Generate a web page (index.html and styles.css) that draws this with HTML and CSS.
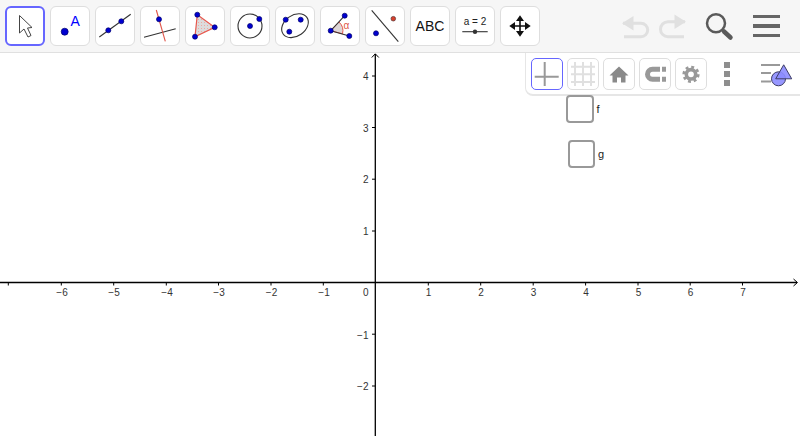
FILE: index.html
```html
<!DOCTYPE html>
<html lang="en">
<head>
    <meta charset="UTF-8">
    <meta name="viewport" content="width=device-width, initial-scale=1.0">
    <title>GeoGebra Classic</title>
    <link rel="stylesheet" href="styles.css">
</head>
<body>
    <div class="app">
        <div class="toolbar">
            <div class="tools">
                <button class="tool active">
                    <svg viewBox="0 0 40 40"><path class="cursor" d="M14.5 9.5V27L19 23l4 8 3-1.5L22.500 22l4.500-.5Z"/></svg>
                </button>
                <button class="tool">
                    <svg viewBox="0 0 40 40"><circle class="pt big" cx="14.700" cy="25.700" r="3.500"/><text class="pt-name" x="20.500" y="19.500">A</text></svg>
                </button>
                <button class="tool">
                    <svg viewBox="0 0 40 40"><path class="ln" d="M4.300 31 35.700 8.300"/><circle class="pt" cx="13.300" cy="24.300" r="2.500"/><circle class="pt" cx="26.300" cy="15.300" r="2.500"/></svg>
                </button>
                <button class="tool">
                    <svg viewBox="0 0 40 40"><path class="ln" d="M4 31.300 35.700 22.700"/><path class="ln-red" d="M16.300 4 25.300 35.300"/><circle class="pt" cx="19" cy="13.300" r="2.500"/></svg>
                </button>
                <button class="tool">
                    <svg viewBox="0 0 40 40">
                        <defs>
                            <pattern id="stipple" width="3" height="3" patternUnits="userSpaceOnUse"><rect class="stipple-bg" width="3" height="3"/><rect class="stipple-dot" x="1" y="1" width="1" height="1"/></pattern>
                        </defs>
                        <path class="poly" fill="url(#stipple)" d="M12.300 8.700 29.700 21.300 10 30.700Z"/><circle class="pt" cx="12.300" cy="8.700" r="2.500"/><circle class="pt" cx="29.700" cy="21.300" r="2.500"/><circle class="pt" cx="10" cy="30.700" r="2.500"/>
                    </svg>
                </button>
                <button class="tool">
                    <svg viewBox="0 0 40 40"><circle class="ln" cx="20" cy="20" r="12"/><circle class="pt" cx="20" cy="20" r="2.500"/><circle class="pt" cx="29.300" cy="13" r="2.500"/></svg>
                </button>
                <button class="tool">
                    <svg viewBox="0 0 40 40"><ellipse class="ln" cx="20" cy="19.700" rx="14.500" ry="10.500" transform="rotate(-35 20 19.700)"/><circle class="pt" cx="10.700" cy="13.700" r="2.500"/><circle class="pt" cx="25.700" cy="13.700" r="2.500"/><circle class="pt" cx="14.300" cy="25.700" r="2.500"/></svg>
                </button>
                <button class="tool">
                    <svg viewBox="0 0 40 40"><path class="wedge" d="M10.700 24.700 19 16A12 12 0 0 1 22.500 27.800Z"/><path class="ln" d="M24.700 9.700 10.700 24.700 29.300 30"/><text class="alpha" x="23.500" y="23">α</text><circle class="pt" cx="10.700" cy="24.700" r="2.500"/><circle class="pt" cx="24.700" cy="9.700" r="2.500"/><circle class="pt" cx="29.300" cy="30" r="2.500"/></svg>
                </button>
                <button class="tool">
                    <svg viewBox="0 0 40 40"><path class="ln" d="M6.700 4.300 33.300 35.700"/><circle class="pt" cx="11" cy="27.300" r="2.500"/><circle class="pt red" cx="28.300" cy="12.700" r="2.300"/></svg>
                </button>
                <button class="tool abc">ABC</button>
                <button class="tool">
                    <svg viewBox="0 0 40 40"><text class="slider-text" x="20" y="19">a = 2</text><path class="ln" d="M7.300 25.700H32.700"/><circle class="knob" cx="20" cy="25.700" r="2.200"/></svg>
                </button>
                <button class="tool">
                    <svg viewBox="0 0 40 40"><path class="move-line" d="M20 12V28M12 20H28"/><path class="move-head" d="M20 9.300 24 15H16ZM20 30.700 16 25H24ZM9.300 20 15 16V24ZM30.700 20 25 24V16Z"/></svg>
                </button>
            </div>
            <div class="actions">
                <svg class="undo" viewBox="0 0 30 26" width="30" height="26"><path d="M2 10.300H20a6.700 6.700 0 0 1 0 13.400H3"/><path class="head" d="M1 10.300 12.500 3V17.600Z"/></svg>
                <svg class="undo" viewBox="0 0 30 26" width="30" height="26"><path d="M28 8.700H11a7.500 7.500 0 0 0 0 15H27"/><path class="head" d="M29 8.700 17.500 1.400V16Z"/></svg>
                <svg class="search" viewBox="0 0 32 32" width="32" height="32"><circle cx="13" cy="13.300" r="9"/><path class="grip" d="M21 21.500 27.500 27.500"/></svg>
                <div class="menu"><span></span><span></span><span></span></div>
            </div>
        </div>

        <div class="graphics">
            <svg class="plot" viewBox="0 53 800 385" width="800" height="385">
                <path class="tick" d="M8.300 282V285.500M61.300 282V285.500M113.700 282V285.500M166.300 282V285.500M218.500 282V285.500M271 282V285.500M323.300 282V285.500M428.300 282V285.500M480.700 282V285.500M533.200 282V285.500M585.600 282V285.500M638 282V285.500M690.200 282V285.500M742.500 282V285.500"/>
                <path class="tick" d="M372 76H375M372 127.500H375M372 179.200H375M372 231H375M372 334.200H375M372 386H375"/>
                <path class="axis" d="M0 282.500H797M375.300 54V436"/>
                <path class="arrow" d="M793.500 279 797.500 282.500 793.500 286M371.800 57.500 375.300 53.800 378.800 57.500"/>

                <g class="nums-x">
                    <text x="62" y="296">−6</text>
                    <text x="114" y="296">−5</text>
                    <text x="167" y="296">−4</text>
                    <text x="219" y="296">−3</text>
                    <text x="271.500" y="296">−2</text>
                    <text x="324" y="296">−1</text>
                    <text x="428.500" y="296">1</text>
                    <text x="481" y="296">2</text>
                    <text x="533.500" y="296">3</text>
                    <text x="586" y="296">4</text>
                    <text x="638.500" y="296">5</text>
                    <text x="690.500" y="296">6</text>
                    <text x="743" y="296">7</text>
                </g>
                <g class="nums-y">
                    <text x="368.500" y="80">4</text>
                    <text x="368.500" y="131.500">3</text>
                    <text x="368.500" y="183">2</text>
                    <text x="368.500" y="235">1</text>
                    <text x="368.500" y="296">0</text>
                    <text x="368.500" y="338.500">−1</text>
                    <text x="368.500" y="390">−2</text>
                </g>
            </svg>

            <div class="stylebar">
                <button class="style-btn on">
                    <svg viewBox="0 0 32 32"><path class="sb-axes" d="M3.700 18.700H27.700M13.700 4V28"/></svg>
                </button>
                <button class="style-btn">
                    <svg viewBox="0 0 32 32"><path class="sb-grid" d="M8 4V28M16 4V28M24 4V28M4 8.700H28M4 16.300H28M4 24H28"/></svg>
                </button>
                <button class="style-btn">
                    <svg viewBox="0 0 32 32"><path class="sb-fill" d="M16 8.500 25.500 17.500H22.500V24.500H18V19.500H14V24.500H9.500V17.500H6.500Z"/></svg>
                </button>
                <button class="style-btn">
                    <svg viewBox="0 0 32 32"><path class="sb-magnet" d="M21 11.200H13.500a5 5 0 0 0 0 10H21"/><path class="sb-pole" d="M23 8.700H27V13.700H23ZM23 18.700H27V23.700H23Z"/></svg>
                </button>
                <button class="style-btn">
                    <svg viewBox="0 0 32 32"><circle class="sb-gear" cx="16" cy="16.300" r="4.700"/><circle class="sb-teeth" cx="16" cy="16.300" r="7.300"/></svg>
                </button>
                <div class="dots"><span></span><span></span><span></span></div>
                <svg class="view-icon" viewBox="0 0 32 24" width="32" height="24">
                    <path class="view-lines" d="M0 3H19M0 11H10M0 19.500H10"/>
                    <circle class="view-shape" cx="17.500" cy="16.800" r="7"/>
                    <path class="view-shape" d="M22.700 2.800 30.700 16.800H14.700Z"/>
                </svg>
            </div>

            <label class="check check-f"><span class="box"></span>f</label>
            <label class="check check-g"><span class="box"></span>g</label>
        </div>
    </div>
</body>
</html>
```

FILE: styles.css
```css
body {
    margin: 0;
    background-color: #FFFFFF;
    font-family: "Liberation Sans", Arial, sans-serif;
    overflow: hidden;
}
.app {
    display: flex;
    flex-direction: column;
    height: 438px;
}
button {
    padding: 0;
    background-color: #FFFFFF;
    font-family: inherit;
}
svg {
    display: block;
}

/* top toolbar */
.toolbar {
    display: flex;
    align-items: flex-start;
    justify-content: space-between;
    box-sizing: border-box;
    height: 53px;
    padding: 6px 20.500px 0 5px;
    background-color: #F6F6F6;
    border-bottom: 1px solid #E0E0E0;
}
.tools {
    display: flex;
    gap: 5px;
}
.tool {
    box-sizing: border-box;
    width: 40px;
    height: 40px;
    border: 1px solid #DEDEDE;
    border-radius: 6px;
}
.tool svg {
    width: 40px;
    height: 40px;
    margin: -1px;
}
.tool.active {
    border: 2px solid #6666FF;
}
.tool.active svg {
    margin: -2px;
}
.abc {
    font-size: 14px;
    color: #111;
}
.cursor {
    fill: #FFFFFF;
    stroke: #444;
    stroke-width: 1;
}
.pt {
    fill: #0000D0;
    stroke: #00006A;
    stroke-width: 0.7;
}
.pt.red {
    fill: #D8402C;
    stroke: #553333;
}
.pt-name {
    font-size: 14px;
    fill: #0000FF;
}
.ln {
    fill: none;
    stroke: #333;
    stroke-width: 1.1;
}
.ln-red {
    fill: none;
    stroke: #E0554A;
    stroke-width: 1.1;
}
.poly {
    stroke: #E8574C;
    stroke-width: 1.2;
}
.stipple-bg {
    fill: #DCDCDC;
}
.stipple-dot {
    fill: #F0A8A0;
}
.wedge {
    fill: #DDD6D6;
    stroke: #E8574C;
    stroke-width: 1;
}
.alpha {
    font-size: 10px;
    fill: #E0554A;
}
.slider-text {
    font-size: 10px;
    fill: #222;
    text-anchor: middle;
}
.knob {
    fill: #333;
}
.move-line {
    fill: none;
    stroke: #111;
    stroke-width: 1.600;
}
.move-head {
    fill: #111;
}

.actions {
    display: flex;
    align-items: center;
    height: 40px;
}
.undo {
    margin-right: 6px;
    overflow: visible;
}
.undo path {
    fill: none;
    stroke: #E0E0E0;
    stroke-width: 3;
}
.undo .head {
    fill: #E0E0E0;
    stroke: none;
}
.search {
    margin: 0 17.500px 0 10px;
}
.search circle {
    fill: none;
    stroke: #5A5A5A;
    stroke-width: 2.500;
}
.search .grip {
    stroke: #5A5A5A;
    stroke-width: 4.500;
    stroke-linecap: round;
}
.menu {
    display: flex;
    flex-direction: column;
    gap: 6.300px;
    width: 27px;
}
.menu span {
    height: 3.400px;
    background-color: #666;
}

/* graphics view */
.graphics {
    position: relative;
    flex: 1;
}
.axis {
    fill: none;
    stroke: #000;
    stroke-width: 1.300;
}
.tick {
    fill: none;
    stroke: #000;
    stroke-width: 1;
}
.arrow {
    fill: none;
    stroke: #000;
    stroke-width: 1;
}
.nums-x text,
.nums-y text {
    font-size: 10px;
    fill: #333;
}
.nums-x text {
    text-anchor: middle;
}
.nums-y text {
    text-anchor: end;
}

/* style bar over the graphics view */
.stylebar {
    position: absolute;
    top: 0;
    right: 0;
    left: 525px;
    display: flex;
    align-items: center;
    gap: 4px;
    box-sizing: border-box;
    height: 43px;
    padding-left: 5px;
    background-color: #FFFFFF;
    border-left: 1px solid #E6E6E6;
    border-bottom: 2px solid #E6E6E6;
    border-bottom-left-radius: 8px;
}
.style-btn {
    box-sizing: border-box;
    width: 32px;
    height: 32px;
    border: 1px solid #DEDEDE;
    border-radius: 5px;
}
.style-btn svg {
    width: 32px;
    height: 32px;
    margin: -1px;
}
.style-btn.on {
    border-color: #6666FF;
}
.sb-axes {
    fill: none;
    stroke: #999;
    stroke-width: 2;
}
.sb-grid {
    fill: none;
    stroke: #E0E0E0;
    stroke-width: 2;
}
.sb-fill {
    fill: #8A8A8A;
}
.sb-magnet {
    fill: none;
    stroke: #999;
    stroke-width: 5;
}
.sb-pole {
    fill: #999;
}
.sb-gear {
    fill: none;
    stroke: #999;
    stroke-width: 3.600;
}
.sb-teeth {
    fill: none;
    stroke: #999;
    stroke-width: 2.600;
    stroke-dasharray: 2.900 2.835;
}
.dots {
    display: flex;
    flex-direction: column;
    gap: 3px;
    margin-left: 13px;
}
.dots span {
    width: 6px;
    height: 6px;
    background-color: #8E8E8E;
}
.view-icon {
    margin-left: 27px;
    overflow: visible;
}
.view-lines {
    fill: none;
    stroke: #999;
    stroke-width: 2;
}
.view-shape {
    fill: #8C8CFF;
    fill-opacity: 0.9;
    stroke: #3C3C66;
    stroke-width: 1;
}

/* checkboxes placed on the canvas */
.check {
    position: absolute;
    display: flex;
    align-items: center;
    gap: 3px;
    font-size: 11px;
    color: #222;
}
.check-f {
    top: 42px;
    left: 566px;
}
.check-g {
    top: 87px;
    left: 567.500px;
}
.box {
    box-sizing: border-box;
    width: 27.500px;
    height: 27.500px;
    background-color: #FFFFFF;
    border: 2px solid #999;
    border-radius: 4px;
}
```
